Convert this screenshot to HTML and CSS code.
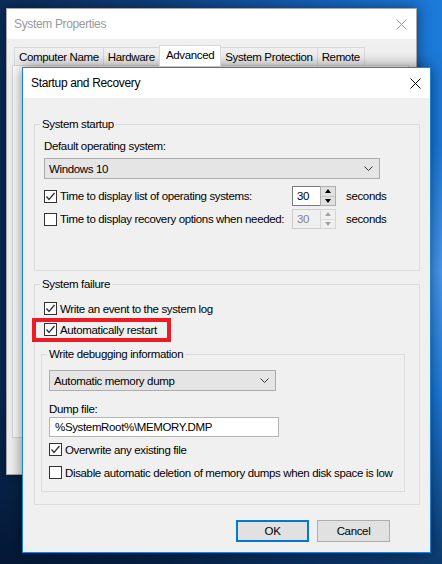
FILE: index.html
```html
<!DOCTYPE html>
<html lang="en">
<head>
    <meta charset="UTF-8">
    <meta name="viewport" content="width=device-width, initial-scale=1.0">
    <title>Startup and Recovery</title>
    <link rel="stylesheet" href="styles.css">
</head>
<body>
    <!-- Parent dialog, inactive, sitting behind -->
    <div class="window back">
        <div class="titlebar">
            <span class="title">System Properties</span>
            <span class="close">
                <svg width="11" height="11" viewBox="0 0 11 11"><path d="M0.5 0.5 L10.5 10.5 M10.5 0.5 L0.5 10.5" stroke="#999" stroke-width="1" fill="none"/></svg>
            </span>
        </div>
        <div class="back-body">
            <div class="tabs">
                <span class="tab">Computer Name</span>
                <span class="tab">Hardware</span>
                <span class="tab active">Advanced</span>
                <span class="tab">System Protection</span>
                <span class="tab">Remote</span>
            </div>
            <div class="tab-panel"></div>
        </div>
    </div>

    <!-- Startup and Recovery dialog -->
    <div class="window dialog">
        <div class="titlebar">
            <span class="title">Startup and Recovery</span>
            <span class="close">
                <svg width="11" height="11" viewBox="0 0 11 11"><path d="M0.5 0.5 L10.5 10.5 M10.5 0.5 L0.5 10.5" stroke="#000" stroke-width="1" fill="none"/></svg>
            </span>
        </div>
        <div class="dialog-body">
            <fieldset class="group startup">
                <legend>System startup</legend>
                <div class="field-label">Default operating system:</div>
                <div class="combo os-combo">
                    <span>Windows 10</span>
                    <svg class="chevron" width="9" height="5" viewBox="0 0 9 5"><polyline points="0.5,0.5 4.5,4.5 8.5,0.5" stroke="#333" fill="none" stroke-width="1"/></svg>
                </div>
                <div class="option-row first">
                    <label class="check-label">
                        <span class="checkbox"><svg width="11" height="11" viewBox="0 0 11 11"><polyline points="1.5,5.5 4,8.5 9.5,2" stroke="#333" stroke-width="1.3" fill="none"/></svg></span>
                        Time to display list of operating systems:
                    </label>
                    <div class="spin">
                        <span class="spin-value">30</span>
                        <span class="spin-arrows"><span class="spin-btn up"></span><span class="spin-btn down"></span></span>
                    </div>
                    <span class="unit">seconds</span>
                </div>
                <div class="option-row">
                    <label class="check-label">
                        <span class="checkbox"></span>
                        Time to display recovery options when needed:
                    </label>
                    <div class="spin disabled">
                        <span class="spin-value">30</span>
                        <span class="spin-arrows"><span class="spin-btn up"></span><span class="spin-btn down"></span></span>
                    </div>
                    <span class="unit">seconds</span>
                </div>
            </fieldset>

            <fieldset class="group failure">
                <legend>System failure</legend>
                <label class="check-row">
                    <span class="checkbox"><svg width="11" height="11" viewBox="0 0 11 11"><polyline points="1.5,5.5 4,8.5 9.5,2" stroke="#333" stroke-width="1.3" fill="none"/></svg></span>
                    Write an event to the system log
                </label>
                <label class="check-row flagged">
                    <span class="checkbox"><svg width="11" height="11" viewBox="0 0 11 11"><polyline points="1.5,5.5 4,8.5 9.5,2" stroke="#333" stroke-width="1.3" fill="none"/></svg></span>
                    Automatically restart
                    <span class="marker"></span>
                </label>

                <fieldset class="group debug">
                    <legend>Write debugging information</legend>
                    <div class="combo dump-combo">
                        <span>Automatic memory dump</span>
                        <svg class="chevron" width="9" height="5" viewBox="0 0 9 5"><polyline points="0.5,0.5 4.5,4.5 8.5,0.5" stroke="#333" fill="none" stroke-width="1"/></svg>
                    </div>
                    <div class="field-label dump-label">Dump file:</div>
                    <div class="text-field">%SystemRoot%\MEMORY.DMP</div>
                    <label class="check-row overwrite">
                        <span class="checkbox"><svg width="11" height="11" viewBox="0 0 11 11"><polyline points="1.5,5.5 4,8.5 9.5,2" stroke="#333" stroke-width="1.3" fill="none"/></svg></span>
                        Overwrite any existing file
                    </label>
                    <label class="check-row disable">
                        <span class="checkbox"></span>
                        Disable automatic deletion of memory dumps when disk space is low
                    </label>
                </fieldset>
            </fieldset>

            <div class="buttons">
                <button class="btn default">OK</button>
                <button class="btn">Cancel</button>
            </div>
        </div>
    </div>
</body>
</html>
```

FILE: styles.css
```css
* {
    box-sizing: border-box;
}

body {
    margin: 0;
    width: 442px;
    height: 564px;
    overflow: hidden;
    position: relative;
    font-family: "Liberation Sans", Arial, sans-serif;
    font-size: 11.5px;
    letter-spacing: -0.35px;
    color: #000;
    background-color: #0d3a70;
    background-image:
        linear-gradient(to bottom, rgba(0, 8, 25, 0) 70%, rgba(0, 8, 25, 0.55) 100%),
        radial-gradient(ellipse at 100% 48%, rgba(110, 180, 255, 0.55) 0, rgba(30, 120, 220, 0) 30%),
        linear-gradient(to right, #0a2c58 0%, #0f3f7a 35%, #1660b8 70%, #1c7ad8 100%);
}

/* Window frames */
.window {
    position: absolute;
    background: #f0f0f0;
    display: flex;
    flex-direction: column;
}

.back {
    left: 6px;
    top: 8px;
    width: 411px;
    height: 467px;
    border: 1px solid #a8a8a8;
    box-shadow: 0 0 12px rgba(0, 0, 0, 0.45);
}

.dialog {
    left: 22px;
    top: 67px;
    width: 409px;
    height: 486px;
    border: 1px solid #1883d7;
    box-shadow: 0 0 14px rgba(0, 0, 0, 0.5);
}

.titlebar {
    flex: none;
    height: 30px;
    background: #fff;
    display: flex;
    align-items: center;
    justify-content: space-between;
}

.titlebar .title {
    padding-left: 8px;
    font-size: 12px;
}

.back .titlebar .title {
    padding-left: 7px;
    color: #999;
}

.close {
    width: 30px;
    height: 30px;
    display: flex;
    align-items: center;
    justify-content: center;
}

/* Tabs of the parent dialog */
.back-body {
    padding: 6px 7px 0 5px;
}

.tabs {
    display: flex;
    align-items: flex-end;
    height: 20px;
    margin-left: 2px;
}

.tab {
    height: 18px;
    padding: 0 4px;
    display: flex;
    align-items: center;
    border: 1px solid #d9d9d9;
    border-bottom: none;
    margin-right: -1px;
    white-space: nowrap;
}

.tab.active {
    height: 21px;
    margin-bottom: -1px;
    padding: 0 6px 2px;
    background: #fff;
    position: relative;
    z-index: 1;
}

.tab-panel {
    height: 373px;
    background: #fff;
    border: 1px solid #d9d9d9;
}

/* Dialog contents */
.dialog-body {
    padding: 20px 10px 0 11px;
}

.group {
    margin: 0;
    padding: 8px 9px 41px;
    border: 1px solid #dcdcdc;
    min-width: 0;
}

.group legend {
    padding: 0 2px;
    margin-left: -4px;
    line-height: 13px;
}

.failure {
    margin-top: 7px;
    padding: 9px 9px 12px;
}

.debug {
    margin: 10px 5px 0 -3px;
    padding: 9px 7px 10px;
}

.debug legend {
    margin-left: -2px;
}

.field-label {
    line-height: 15px;
}

.dump-label {
    margin-top: 11px;
}

.combo {
    height: 21px;
    margin-top: 4px;
    padding: 0 6px 0 4px;
    background: #e5e5e5;
    border: 1px solid #acacac;
    display: flex;
    align-items: center;
    justify-content: space-between;
}

.os-combo {
    width: 336px;
}

.dump-combo {
    width: 227px;
    margin-top: 0;
}

.text-field {
    width: 230px;
    height: 20px;
    padding-left: 5px;
    line-height: 18px;
    background: #fff;
    border: 1px solid #b4b4b4;
}

/* Checkboxes */
.checkbox {
    flex: none;
    width: 13px;
    height: 13px;
    border: 1px solid #333;
    background: #fff;
    display: flex;
    align-items: center;
    justify-content: center;
}

.check-label,
.check-row {
    display: flex;
    align-items: center;
    gap: 3px;
    white-space: nowrap;
}

.check-row {
    height: 17px;
}

.check-row + .check-row {
    margin-top: 4px;
}

.overwrite {
    margin-top: 4px;
}

.check-row.disable {
    margin-top: 6px;
}

.flagged {
    position: relative;
}

.marker {
    position: absolute;
    left: -12px;
    top: -3px;
    width: 139px;
    height: 24px;
    border: 4px solid #ed1c24;
}

/* Spin boxes */
.option-row {
    display: flex;
    align-items: center;
    height: 20px;
    margin-top: 3px;
}

.option-row.first {
    margin-top: 7px;
}

.check-label {
    width: 248px;
}

.spin {
    display: flex;
    width: 44px;
    height: 20px;
}

.spin-value {
    width: 28px;
    padding-left: 4px;
    line-height: 18px;
    background: #fff;
    border: 1px solid #7a7a7a;
    border-right: none;
}

.spin-arrows {
    width: 16px;
    display: flex;
    flex-direction: column;
    border: 1px solid #adadad;
    background: #e1e1e1;
}

.spin-btn {
    flex: 1;
    display: flex;
    align-items: center;
    justify-content: center;
}

.spin-btn.up {
    border-bottom: 1px solid #c4c4c4;
}

.spin-btn.up::after {
    content: "";
    border-left: 3.5px solid transparent;
    border-right: 3.5px solid transparent;
    border-bottom: 4px solid #000;
}

.spin-btn.down::after {
    content: "";
    border-left: 3.5px solid transparent;
    border-right: 3.5px solid transparent;
    border-top: 4px solid #000;
}

.spin.disabled .spin-value {
    color: #838383;
    background: #f0f0f0;
    border-color: #cccccc;
}

.spin.disabled .spin-arrows {
    background: #f0f0f0;
    border-color: #d5d5d5;
}

.spin.disabled .spin-btn.up {
    border-bottom-color: #dedede;
}

.spin.disabled .spin-btn.up::after {
    border-bottom-color: #a3a3a3;
}

.spin.disabled .spin-btn.down::after {
    border-top-color: #a3a3a3;
}

.unit {
    margin-left: 10px;
}

/* Buttons */
.buttons {
    display: flex;
    justify-content: flex-end;
    gap: 8px;
    margin: 15px 30px 0 0;
}

.btn {
    width: 73px;
    height: 22px;
    padding: 0;
    font-family: inherit;
    font-size: 11.5px;
    letter-spacing: -0.35px;
    color: #000;
    background: #e1e1e1;
    border: 1px solid #adadad;
}

.btn.default {
    border: 2px solid #0078d7;
}
```
